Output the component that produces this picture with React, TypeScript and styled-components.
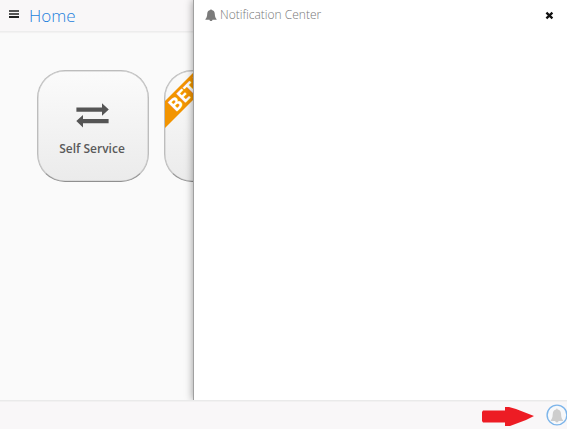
import React from "react";
import styled, { createGlobalStyle } from "styled-components";

const GlobalStyle = createGlobalStyle`
  * { box-sizing: border-box; }
  body { margin: 0; overflow: hidden; font-family: "Open Sans", sans-serif; background: #fafafa; }
  svg { display: block; }
`;

const Page = styled.div`
  height: 429px;
  width: 567px;
  display: flex;
  flex-direction: column;
  overflow: hidden;
`;

const Body = styled.div`
  height: 400px;
  display: flex;
  overflow: hidden;
`;

const Main = styled.main`
  width: 193px;
  flex: none;
  overflow: hidden;
  background: #fafafa;
`;

const TopBar = styled.header`
  height: 32px;
  display: flex;
  align-items: flex-start;
  padding-left: 9px;
  background: #f9f7f8;
  border-bottom: 1px solid #ededed;
  box-shadow: 0 1px 1px #f3f2f2;
`;

const MenuIcon = styled.svg`
  margin-top: 10px;
`;

const Title = styled.h1`
  margin: 3px 0 0 10px;
  font-size: 17px;
  line-height: 25px;
  font-weight: 300;
  color: #1d7fdc;
`;

const Tiles = styled.div`
  display: flex;
  gap: 15px;
  padding: 38px 0 0 37px;
`;

const Tile = styled.div`
  position: relative;
  width: 112px;
  height: 112px;
  flex: none;
  overflow: hidden;
  display: flex;
  flex-direction: column;
  align-items: center;
  padding: 32px 2px 0 0;
  border: 1px solid #bdbdbd;
  border-bottom-color: #8f8f8f;
  border-radius: 28px;
  background: linear-gradient(#fbfbfb, #ebebeb);
  box-shadow: inset 0 0 0 0.5px #c9c9c9;
`;

const TileLabel = styled.span`
  margin-top: 12px;
  font-size: 12px;
  line-height: 17px;
  font-weight: 600;
  color: #5a5a5a;
`;

const Ribbon = styled.span`
  position: absolute;
  left: -38px;
  top: 12px;
  width: 120px;
  height: 19px;
  padding-left: 38px;
  transform: rotate(-45deg);
  background: #f29400;
  color: #fff;
  font-size: 18px;
  line-height: 19px;
  font-weight: 700;
`;

const Drawer = styled.aside`
  position: relative;
  flex: 1;
  background: #fff;
  border-left: 1px solid #a0a0a0;
  box-shadow: 0 0 8px rgba(0, 0, 0, 0.4);
`;

const DrawerHeader = styled.div`
  display: flex;
  align-items: flex-start;
  padding: 6px 13px 0 11px;
`;

const DrawerTitle = styled.h2`
  flex: 1;
  margin: 0 0 0 3px;
  font-size: 12px;
  line-height: 17px;
  font-weight: 300;
  color: #777;
`;

const BellIcon = styled.svg`
  margin-top: 3px;
`;

const CloseButton = styled.button`
  margin: 5px 0 0;
  padding: 0;
  border: 0;
  background: none;
`;

const Footer = styled.footer`
  position: relative;
  height: 29px;
  display: flex;
  justify-content: flex-end;
  align-items: flex-start;
  padding-top: 3px;
  gap: 12px;
  background: #f9f7f8;
  border-top: 1px solid #eaeaea;
  box-shadow: inset 0 1px 0 #f2f1f1;
`;

const Pointer = styled.svg`
  margin-top: 2px;
`;

const BELL =
  "M5.3 1C5.3 0 6.7 0 6.7 1C8.8 1.3 9.7 2.9 9.8 5C9.9 7.8 10.6 9 11.6 10.2V10.8H7.5C7.5 12.4 4.5 12.4 4.5 10.8H0.4V10.2C1.4 9 2.1 7.8 2.2 5C2.3 2.9 3.2 1.3 5.3 1Z";

export default function App() {
  return (
    <Page>
      <GlobalStyle />
      <Body>
        <Main>
          <TopBar>
            <MenuIcon width="10" height="9">
              <path d="M0 0H10V2H0Z" fill="#555" />
              <path d="M0 3H10V5H0Z" fill="#555" />
              <path d="M0 6H10V8H0Z" fill="#222" />
            </MenuIcon>
            <Title>Home</Title>
          </TopBar>
          <Tiles>
            <Tile>
              <svg width="33" height="25" viewBox="0 0 33 25" fill="#555">
                <path d="M0.4 4.5H26V0.3L32.8 6.5L26 12.7V8.7H0.4Z" />
                <path d="M32.6 16H7V12L0.3 18.1L7 24.4V20.2H32.6Z" />
              </svg>
              <TileLabel>Self Service</TileLabel>
            </Tile>
            <Tile>
              <Ribbon>BETA</Ribbon>
            </Tile>
          </Tiles>
        </Main>
        <Drawer>
          <DrawerHeader>
            <BellIcon width="12" height="13" fill="#7b7b7b">
              <path d={BELL} />
            </BellIcon>
            <DrawerTitle>Notification Center</DrawerTitle>
            <CloseButton aria-label="Close">
              <svg width="9" height="9" viewBox="0 0 9 9">
                <path d="M1.4 1.7L7.4 7.3M7.4 1.7L1.4 7.3" stroke="#111" strokeWidth="2.3" />
              </svg>
            </CloseButton>
          </DrawerHeader>
        </Drawer>
      </Body>
      <Footer>
        <Pointer width="52" height="21" viewBox="0 0 52 21">
          <path d="M1 4.5H23V1H27L34 3L52 10L44 14L28 20H23V16.5H1L0 15V6Z" fill="#ed1c24" />
        </Pointer>
        <svg width="21" height="22" viewBox="0 0 21 22">
          <circle cx="11" cy="11" r="9.9" fill="#f7f8fa" stroke="#7db5ea" strokeWidth="1.4" />
          <path d={BELL} transform="translate(4.3 4.2) scale(1.1 1.19)" fill="#cdcdcd" />
        </svg>
      </Footer>
    </Page>
  );
}
